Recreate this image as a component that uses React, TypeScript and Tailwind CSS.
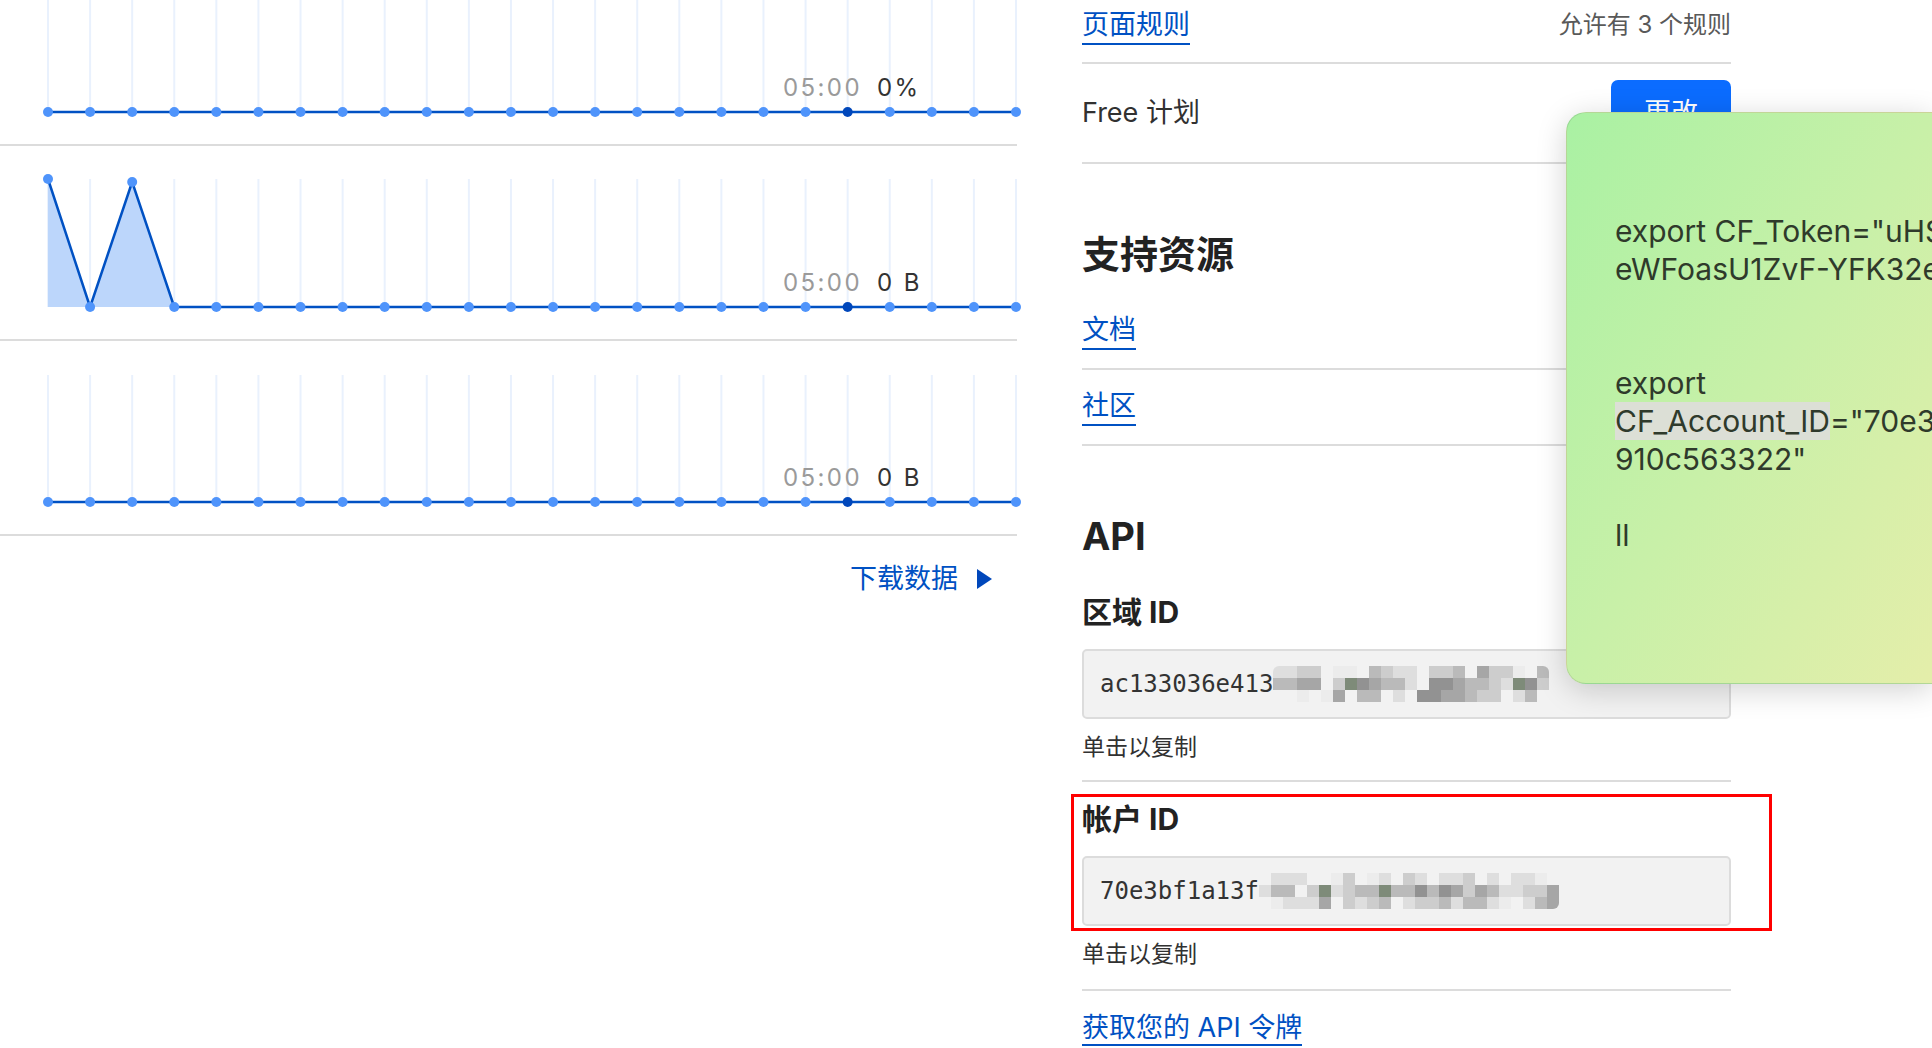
import React from "react";

const DOTS = 24;
const X0 = 48;
const STEP = (1016 - 48) / 23;
const HOVER = 19;

const SHADE: Record<string, string> = {
  ".": "bg-transparent",
  a: "bg-[#ececec]",
  b: "bg-[#dedede]",
  c: "bg-[#cdcdcd]",
  d: "bg-[#bababa]",
  e: "bg-[#a6a6a6]",
  f: "bg-[#929292]",
  g: "bg-[#7e8b79]",
};

// pixelated (blurred) part of an id
const Mosaic = ({ rows }: { rows: string[] }) => (
  <div className="flex flex-col overflow-hidden rounded-[6px]">
    {rows.map((row, r) => (
      <div key={r} className="flex">
        {row.split("").map((ch, c) => (
          <span key={c} className={`h-[12px] w-[12px] ${SHADE[ch]}`} />
        ))}
      </div>
    ))}
  </div>
);

type ChartProps = {
  height: number;
  baseline: number;
  top: number;
  peaks?: number[];
  value: string;
  labelTop: string;
  blockHeight: string;
};

const Chart = ({ height, baseline, top, peaks = [], value, labelTop, blockHeight }: ChartProps) => {
  const xs = Array.from({ length: DOTS }, (_, i) => X0 + i * STEP);
  const ys = xs.map((_, i) => baseline - (peaks[i] ?? 0));
  const line = xs.map((x, i) => `${x},${ys[i]}`).join(" ");
  const fillEnd = peaks.length;
  const fill =
    peaks.length > 0
      ? [`${xs[0]},${baseline}`, ...xs.slice(0, fillEnd + 1).map((x, i) => `${x},${ys[i]}`)].join(" ")
      : "";

  return (
    <div className={`relative ${blockHeight} border-b-2 border-[#dcdcdc]`}>
      <svg width="1024" height={height} className="block overflow-visible">
        {xs.map((x, i) => (
          <line key={i} x1={x} x2={x} y1={Math.max(top, 0)} y2={baseline} stroke="#e9f1fd" strokeWidth="2" />
        ))}
        {fill && <polygon points={fill} fill="#bcd6fb" />}
        <polyline points={line} fill="none" stroke="#0051c3" strokeWidth="2.5" strokeLinejoin="round" />
        {xs.map((x, i) => (
          <circle key={i} cx={x} cy={ys[i]} r="5" fill={i === HOVER ? "#0047bb" : "#4f94fb"} />
        ))}
      </svg>
      <div className={`absolute left-[783px] ${labelTop} flex gap-[15px] text-[24px] leading-[30px] tracking-[0.1em]`}>
        <span className="text-[#9a9a9a]">05:00</span>
        <span className="text-[#333]">{value}</span>
      </div>
    </div>
  );
};

const App = () => {
  return (
    <div className="relative h-screen w-screen overflow-hidden bg-white font-['Inter','Noto_Sans_CJK_SC',sans-serif] text-[#313131]">
      <div className="flex">
        {/* analytics column */}
        <div className="flex w-[1017px] flex-col">
          <Chart height={144} baseline={112} top={-50} value="0%" labelTop="top-[73px]" blockHeight="h-[146px]" />
          <Chart height={193} baseline={161} top={33} peaks={[128, 0, 125]} value="0 B" labelTop="top-[122px]" blockHeight="h-[195px]" />
          <Chart height={193} baseline={161} top={34} value="0 B" labelTop="top-[122px]" blockHeight="h-[195px]" />
          <div className="flex items-center justify-end gap-[19px] pr-[25px] pt-[23px]">
            <span className="text-[27px] leading-[40px] text-[#0051c3]">下载数据</span>
            <svg width="15" height="20" viewBox="0 0 15 20">
              <polygon points="0,0 15,10 0,20" fill="#0047bb" />
            </svg>
          </div>
        </div>

        {/* sidebar */}
        <div className="ml-[65px] flex w-[649px] flex-col">
          <div className="flex h-[64px] items-start justify-between border-b-2 border-[#dcdcdc] pt-[7px]">
            <span className="border-b-2 border-[#0051c3] text-[27px] leading-[36px] text-[#0051c3]">页面规则</span>
            <span className="text-[24px] leading-[36px] text-[#595959]">允许有 3 个规则</span>
          </div>
          <div className="flex h-[100px] items-center justify-between border-b-2 border-[#dcdcdc]">
            <span className="text-[27px] leading-[36px]">Free 计划</span>
            <button className="h-[66px] w-[120px] rounded-[7px] bg-[#0b6cff] text-[27px] text-white">更改</button>
          </div>

          <h2 className="pb-[16px] pt-[66px] text-[38px] font-bold leading-[48px] text-[#222]">支持资源</h2>
          <div className="flex h-[76px] items-center border-b-2 border-[#dcdcdc]">
            <span className="border-b-2 border-[#0051c3] text-[27px] leading-[36px] text-[#0051c3]">文档</span>
          </div>
          <div className="flex h-[76px] items-center border-b-2 border-[#dcdcdc]">
            <span className="border-b-2 border-[#0051c3] text-[27px] leading-[36px] text-[#0051c3]">社区</span>
          </div>

          <h2 className="pt-[66px] text-[38px] font-bold leading-[48px] text-[#222]">API</h2>
          <h3 className="mt-[32px] text-[30px] font-bold leading-[40px] text-[#222]">区域 ID</h3>
          <div className="mt-[17px] flex h-[70px] items-center rounded-[5px] border-2 border-[#dcdcdc] bg-[#f2f2f2] pl-[16px]">
            <span className="font-['DejaVu_Sans_Mono',monospace] text-[24px] text-[#333]">ac133036e413</span>
            <Mosaic rows={["bbcc.aa.dcbb.ccd.ecca.d", "ddee.cgfeddb.ffeddcbgfc", "..a.ae.dd.b.ffeedcc.bd."]} />
          </div>
          <p className="mt-[12px] text-[23px] leading-[32px]">单击以复制</p>
          <div className="mt-[17px] h-[2px] bg-[#dcdcdc]" />

          <div className="relative">
            <div className="pointer-events-none absolute -left-[11px] -right-[41px] top-[12px] h-[137px] border-[3px] border-[#ff0000]" />
            <h3 className="mt-[17px] text-[30px] font-bold leading-[40px] text-[#222]">帐户 ID</h3>
            <div className="mt-[17px] flex h-[70px] items-center rounded-[5px] border-2 border-[#dcdcdc] bg-[#f2f2f2] pl-[16px]">
              <span className="font-['DejaVu_Sans_Mono',monospace] text-[24px] text-[#333]">70e3bf1a13f</span>
              <Mosaic rows={[".bbb..ac.ab.cb.bbc.b.bba.", "bdd.cgbcddgddfdfecedbbcce", ".abbbe.cbcd.bccdbddba.bde"]} />
            </div>
          </div>
          <p className="mt-[12px] text-[23px] leading-[32px]">单击以复制</p>
          <div className="mt-[19px] h-[2px] bg-[#dcdcdc]" />
          <div className="mt-[19px]">
            <span className="border-b-2 border-[#0051c3] text-[27px] leading-[36px] text-[#0051c3]">获取您的 API 令牌</span>
          </div>
        </div>
      </div>

      {/* sticky note lying over the page */}
      <div className="absolute left-[1566px] right-0 top-[112px] h-[572px] rounded-l-[20px] border border-r-0 border-black/10 bg-linear-to-br from-[#a9f1a3] via-[#c8f0a8] to-[#e4eeaa] pl-[48px] pt-[99px] text-[30px] leading-[38px] text-[#2f3a2b] shadow-[0_6px_30px_rgba(0,0,0,0.18)]">
        <div className="whitespace-nowrap">export CF_Token="uHSd1X3</div>
        <div className="whitespace-nowrap">eWFoasU1ZvF-YFK32eQ</div>
        <div className="h-[38px]" />
        <div className="h-[38px]" />
        <div className="whitespace-nowrap">export</div>
        <div className="whitespace-nowrap">
          <span className="inline-block h-[38px] bg-[#dcdfd6]">CF_Account_ID</span>="70e3bf1a13f
        </div>
        <div className="whitespace-nowrap">910c563322"</div>
        <div className="h-[38px]" />
        <div className="whitespace-nowrap">ll</div>
      </div>
    </div>
  );
};

export default App;
